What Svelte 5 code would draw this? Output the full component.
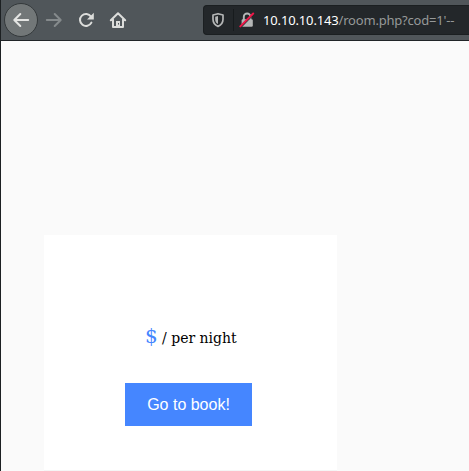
<script>
  const host = '10.10.10.143';
  const path = "/room.php?cod=1'--";
</script>

<div class="window">
  <header class="toolbar">
    <button class="nav back" aria-label="Back">
      <svg width="18" height="18" viewBox="0 0 18 18"><path d="M16.2 9H2.5M8.3 3L2.3 9l6 6" stroke="#e4e5e3" /></svg>
    </button>
    <button class="nav forward" aria-label="Forward">
      <svg width="18" height="18" viewBox="0 0 18 18"><path d="M1.8 9h13.7M9.7 3l6 6-6 6" stroke="#858a8c" /></svg>
    </button>
    <button class="nav reload" aria-label="Reload">
      <svg width="18" height="18" viewBox="0 0 18 18"><path d="M14 5.6A6 6 0 1 0 14.4 11.6" stroke="#dcdddb" /><path d="M16.8 1.8v6.7H10z" fill="#dcdddb" /></svg>
    </button>
    <button class="nav home" aria-label="Home">
      <svg width="18" height="18" viewBox="0 0 18 18"><path d="M1.8 9.2L9 2.2l7.2 7M4 8.5V16h10V8.5" stroke="#dcdddb" /><path d="M7 16v-6h4v6z" fill="#dcdddb" /><path d="M9.5 12v1.6" stroke="#50565a" stroke-width="1" stroke-linecap="butt" /></svg>
    </button>
    <div class="urlbar">
      <svg class="shield" width="14" height="16" viewBox="0 0 14 16"><path d="M7 1.7L12 3v4.2c0 3.5-2 5.9-5 7.2-3-1.3-5-3.7-5-7.2V3z" fill="none" stroke="#b4b6b6" stroke-width="1.7" stroke-linejoin="round" /><path d="M7 4.1l-2.8.7v2.6c0 2 .9 3.6 2.8 4.6z" fill="#b4b6b6" /></svg>
      <span class="divider"></span>
      <svg class="lock" width="16" height="16" viewBox="0 0 16 16"><path d="M4.8 8V4.8a3.3 3.3 0 0 1 6.6 0V8" fill="none" stroke="#b4b6b6" stroke-width="1.9" /><rect x="2.6" y="7.2" width="11.2" height="7.5" rx="1.2" fill="#b4b6b6" /><path d="M1.2 15.8L15 1.7" stroke="#23272a" stroke-width="1.5" /><path d="M1.3 14.4L14.2 1.5" stroke="#ee1748" stroke-width="2" stroke-linecap="round" /></svg>
      <span class="address"><span class="host">{host}</span><span class="path">{path}</span></span>
    </div>
  </header>
  <main>
    <section class="card">
      <p class="price"><span class="currency">$</span><span class="unit">/ per night</span></p>
      <button class="book">Go to book!</button>
    </section>
  </main>
</div>

<style>
  :global(body) { margin: 0; overflow: hidden; }
  .window { box-sizing: border-box; width: 469px; height: 471px; overflow: hidden; border-left: 1px solid #1c2022; background: #fafafa; display: flex; flex-direction: column; }
  .toolbar { box-sizing: border-box; height: 41px; flex: none; display: flex; align-items: center; background: #50565a; border-bottom: 1px solid #202427; }
  button { appearance: none; border: 0; padding: 0; margin: 0; }
  .nav { width: 32px; height: 32px; flex: none; display: flex; align-items: center; justify-content: center; background: none; }
  .nav svg { fill: none; stroke-width: 2; stroke-linecap: round; stroke-linejoin: round; }
  .back { box-sizing: border-box; width: 34px; height: 34px; margin-left: 3px; border: 1px solid #34393b; border-radius: 50%; background: #727778; }
  .urlbar { box-sizing: border-box; width: 267px; height: 30px; margin-left: 69px; flex: none; display: flex; align-items: center; background: #23272a; border: 1px solid #1b1f21; border-right: 0; border-radius: 4px 0 0 4px; }
  .shield { margin-left: 7px; flex: none; }
  .divider { width: 1px; height: 22px; margin-left: 8px; background: #171b1d; }
  .lock { margin-left: 5px; flex: none; }
  .address { margin-left: 8px; font: 13px/18px "Noto Sans", sans-serif; white-space: pre; }
  .host { color: #fff; letter-spacing: -0.15px; }
  .path { color: #969999; letter-spacing: -0.2px; }
  main { flex: 1; display: flex; align-items: flex-start; padding: 194px 0 0 43px; }
  .card { box-sizing: border-box; width: 293px; height: 236px; padding-top: 87px; display: flex; flex-direction: column; align-items: flex-start; background: #fff; border-bottom: 1px solid #f5f5f5; }
  .price { height: 28px; margin: 0 0 33px 101px; display: flex; align-items: baseline; font: 14px/28px "DejaVu Serif", serif; color: #000; }
  .currency { width: 12px; font-size: 20px; color: #4586ff; }
  .unit { margin-left: 5px; white-space: pre; }
  .book { width: 127px; height: 43px; margin-left: 81px; background: #4586ff; color: #fff; font: 16px/43px "Liberation Sans", Arial, sans-serif; }
</style>
